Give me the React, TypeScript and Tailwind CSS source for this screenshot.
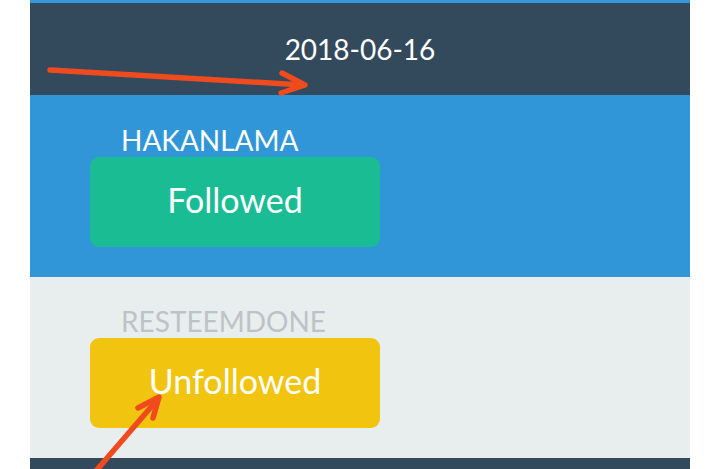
const font = { fontFamily: 'Lato, "Open Sans", sans-serif' };

const Section = ({
  name,
  label,
  nameColor,
  bg,
  btnBg,
  pt,
}: {
  name: string;
  label: string;
  nameColor: string;
  bg: string;
  btnBg: string;
  pt: string;
}) => (
  <div className={`${bg} ${pt} pb-[30px]`}>
    <div className={`ml-[91px] text-[28px] leading-[34px] ${nameColor}`}>{name}</div>
    <div
      className={`ml-[60px] w-[290px] h-[90px] rounded-[9px] ${btnBg} flex items-center justify-center pb-[5px] text-[34px] text-white`}
    >
      {label}
    </div>
  </div>
);

export default function App() {
  return (
    <div className="relative w-full h-[469px] overflow-hidden bg-white" style={font}>
      <div className="mx-[30px] flex flex-col h-full">
        {/* date header */}
        <div className="border-t-[3px] border-[#3498db] bg-[#33495c] h-[95px] pt-[29px] text-center text-[28px] leading-[34px] text-white">
          2018-06-16
        </div>

        <Section
          name="HAKANLAMA"
          label="Followed"
          nameColor="text-white"
          bg="bg-[#3196d8]"
          btnBg="bg-[#1abc94]"
          pt="pt-[28px]"
        />
        <Section
          name="RESTEEMDONE"
          label="Unfollowed"
          nameColor="text-[#bcc3c6]"
          bg="bg-[#e8eeee]"
          btnBg="bg-[#f1c40f]"
          pt="pt-[27px]"
        />

        <div className="flex-1 bg-[#33495c]" />
      </div>

      {/* annotation arrows */}
      <svg
        className="absolute inset-0 pointer-events-none"
        width="720"
        height="469"
        viewBox="0 0 720 469"
      >
        <g stroke="#f04b1e" strokeWidth="5.5" strokeLinecap="round" strokeLinejoin="round" fill="none">
          <path d="M50 70 L303 85" />
          <path d="M282 73 L305 85 L281 93" />
          <path d="M95 472 L158 399" />
          <path d="M138 408 L159 397 L153 418" />
        </g>
      </svg>
    </div>
  );
}
